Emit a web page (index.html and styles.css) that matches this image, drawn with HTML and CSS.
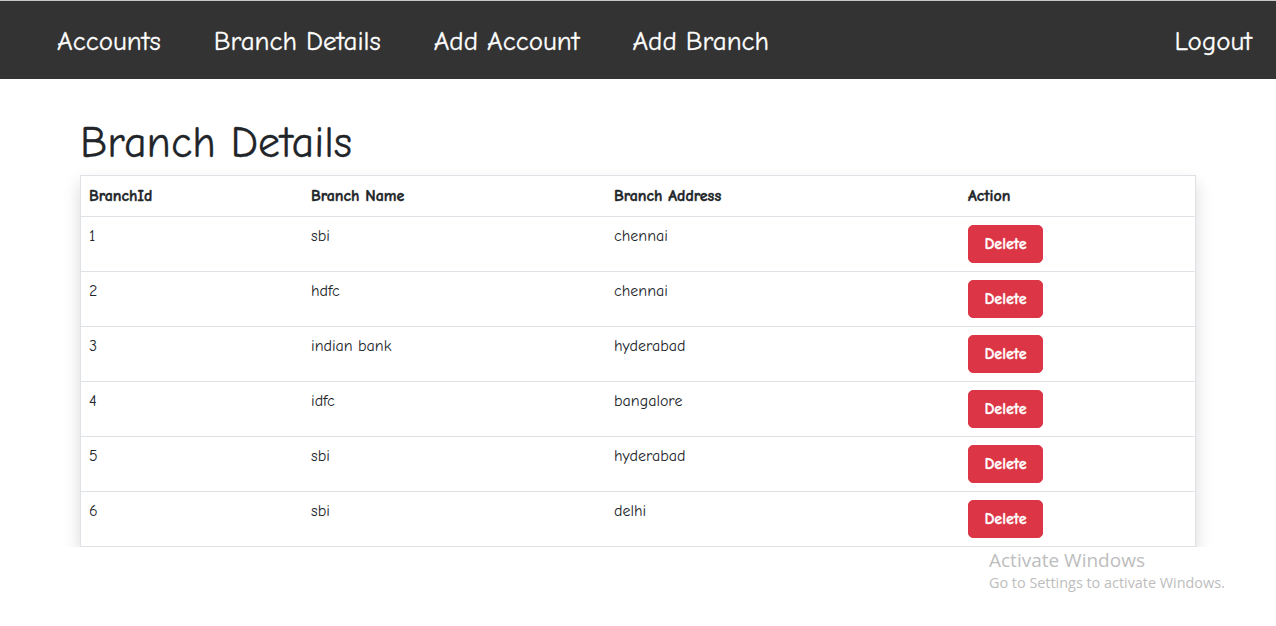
FILE: index.html
```html
<!DOCTYPE html>
<html lang="en">
<head>
<meta charset="utf-8">
<title>Branch Details</title>
<link rel="stylesheet" href="styles.css">
</head>
<body>
<nav class="navbar">
  <ul class="nav-links">
    <li><a href="#">Accounts</a></li>
    <li><a href="#">Branch Details</a></li>
    <li><a href="#">Add Account</a></li>
    <li><a href="#">Add Branch</a></li>
  </ul>
  <a class="logout" href="#">Logout</a>
</nav>
<main class="container">
  <h1 class="title">Branch Details</h1>
  <div class="table-card">
    <table class="branch-table">
      <thead>
        <tr>
          <th class="c-id">BranchId</th>
          <th class="c-name">Branch Name</th>
          <th class="c-addr">Branch Address</th>
          <th class="c-act">Action</th>
        </tr>
      </thead>
      <tbody>
        <tr><td>1</td><td>sbi</td><td>chennai</td><td><button class="btn-delete">Delete</button></td></tr>
        <tr><td>2</td><td>hdfc</td><td>chennai</td><td><button class="btn-delete">Delete</button></td></tr>
        <tr><td>3</td><td>indian bank</td><td>hyderabad</td><td><button class="btn-delete">Delete</button></td></tr>
        <tr><td>4</td><td>idfc</td><td>bangalore</td><td><button class="btn-delete">Delete</button></td></tr>
        <tr><td>5</td><td>sbi</td><td>hyderabad</td><td><button class="btn-delete">Delete</button></td></tr>
        <tr><td>6</td><td>sbi</td><td>delhi</td><td><button class="btn-delete">Delete</button></td></tr>
      </tbody>
    </table>
  </div>
</main>
<div class="watermark">
  <div class="wm-title">Activate Windows</div>
  <div class="wm-sub">Go to Settings to activate Windows.</div>
</div>
</body>
</html>
```
FILE: styles.css
```css
* { box-sizing: border-box; }
html, body { margin: 0; padding: 0; }
body {
  font-family: "Comic Sans MS", "Comic Neue", "DejaVu Sans", sans-serif;
  color: #212529;
  background: #fff;
  font-size: 16px;
  line-height: 1.5;
}
.navbar {
  height: 79px;
  background: #333333;
  border-top: 1px solid #c8c8c8;
  display: flex;
  align-items: center;
  justify-content: space-between;
  padding: 5px 24px 0 57px;
}
.nav-links {
  list-style: none;
  margin: 0;
  padding: 0;
  display: flex;
  gap: 53px;
}
.nav-links a, .logout {
  color: #fff;
  text-decoration: none;
  font-size: 27px;
  line-height: 1.2;
  font-weight: 500;
  -webkit-text-stroke: 0.3px #fff;
}
.container {
  width: 1116px;
  margin: 0 auto;
  padding-top: 38px;
}
.title {
  font-size: 44px;
  font-weight: 400;
  line-height: 1.2;
  margin: 0 0 5px 0;
  color: #212529;
  -webkit-text-stroke: 0.3px #212529;
}
.table-card {
  border: 1px solid #dee2e6;
  box-shadow: 0 8px 16px rgba(0,0,0,0.15);
  background: #fff;
}
.branch-table {
  width: 100%;
  border-collapse: collapse;
  font-size: 16px;
}
.branch-table th, .branch-table td {
  text-align: left;
  vertical-align: top;
  padding: 8px;
  line-height: 23px;
}
.branch-table th {
  font-weight: 700;
  line-height: 24px;
  -webkit-text-stroke: 0.4px #212529;
}
.branch-table tbody tr { border-top: 1px solid #dee2e6; }
.c-id { width: 222px; }
.c-name { width: 303px; }
.c-addr { width: 354px; }
.btn-delete {
  font-family: inherit;
  font-size: 16px;
  font-weight: 700;
  color: #fff;
  background: #dc3545;
  border: 1px solid #dc3545;
  border-radius: 5px;
  padding: 6px 8px;
  line-height: 24px;
  height: 38px;
  width: 75px;
  cursor: pointer;
  -webkit-text-stroke: 0.3px #fff;
}
.watermark {
  position: absolute;
  left: 989px;
  top: 547px;
  color: #bdbdbd;
  font-family: "Open Sans", "Noto Sans", sans-serif;
}
.wm-title { font-size: 19px; line-height: 26px; }
.wm-sub { font-size: 14.4px; line-height: 20px; }
```
